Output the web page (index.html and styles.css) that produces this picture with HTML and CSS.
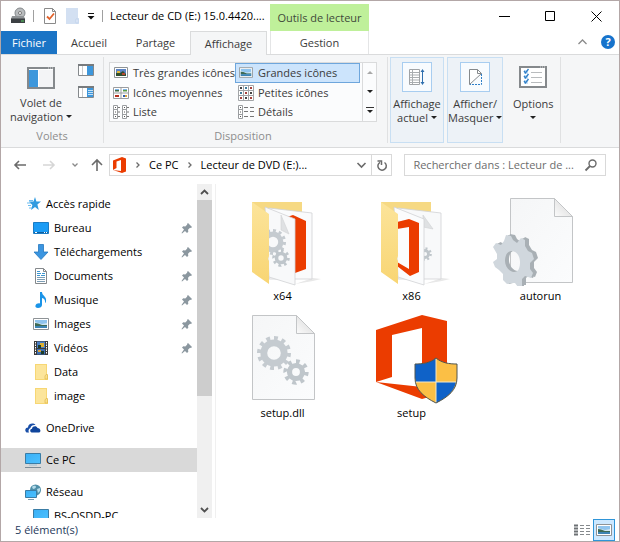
FILE: index.html
```html
<!DOCTYPE html>
<html lang="fr">
<head>
    <meta charset="UTF-8">
    <meta name="viewport" content="width=device-width, initial-scale=1.0">
    <title>Lecteur de CD (E:)</title>
    <link rel="stylesheet" href="styles.css">
</head>
<body>
    <svg class="sprites" aria-hidden="true">
        <defs>
            <linearGradient id="blue" x1="0" y1="0" x2="1" y2="1">
                <stop offset="0" stop-color="#3ab0f5"/>
                <stop offset="1" stop-color="#4cc0ff"/>
            </linearGradient>
            <linearGradient id="flap" x1="0" y1="0" x2="0" y2="1">
                <stop offset="0" stop-color="#fce49a"/>
                <stop offset="1" stop-color="#f8d573"/>
            </linearGradient>
            <linearGradient id="paper" x1="0" y1="0" x2="1" y2="1">
                <stop offset="0" stop-color="#f5f6f7"/>
                <stop offset="1" stop-color="#fbfcfd"/>
            </linearGradient>
            <linearGradient id="fold" x1="0" y1="1" x2="1" y2="0">
                <stop offset="0" stop-color="#fbfbfb"/>
                <stop offset="1" stop-color="#d4d4d4"/>
            </linearGradient>
        </defs>
        <symbol id="pin" viewBox="0 0 12 12">
            <path d="M7 1l4 4-1 1-1-.3-2 2 .3 2-1.300 1.300-2-2L1 11.500.500 11 3 7.500l-2-2L2.300 4.300l2 .3 2-2L6 2z" fill="#8b979f"/>
        </symbol>
        <symbol id="folder" viewBox="0 0 14 16">
            <path d="M0 0h12v11h1v5H0z" fill="#f7d774"/>
            <path d="M1 1h10v14H1z" fill="#fce59b"/>
            <path d="M10 15v-3l1-1.500h1.500V15z" fill="#fae08c" stroke="#dfb94f" stroke-width=".7"/>
        </symbol>
        <symbol id="screen" viewBox="0 0 16 16">
            <path d="M.5 1.500h15v10H.5z" fill="url(#blue)" stroke="#3a7ca5"/>
            <path d="M4 13h8" stroke="#9bc0d6"/>
            <path d="M0 15.500h16" stroke="#7b8b96"/>
        </symbol>
        <symbol id="picture" viewBox="0 0 16 12">
            <path d="M.5.500h15v11H.5z" fill="#fff" stroke="#8e9396"/>
            <path d="M2 2h12v8H2z" fill="#8fc4ee"/>
            <path d="M2 4l3 1 4 1 5-1v2H2z" fill="#cfe6f2"/>
            <path d="M2 5l3 .5L9 7h5v1H2z" fill="#3d6a55"/>
            <path d="M2 8h12v2H2z" fill="#3c84b4"/>
        </symbol>
        <symbol id="gear12" viewBox="-20 -20 40 40">
            <circle r="12" fill="none" stroke="#c5cbd0" stroke-width="8"/>
            <circle r="17.500" fill="none" stroke="#c5cbd0" stroke-width="5" pathLength="24" stroke-dasharray="1 1"/>
        </symbol>
        <symbol id="gear8" viewBox="-20 -20 40 40">
            <circle r="10" fill="none" stroke="#bfc6cb" stroke-width="8"/>
            <circle r="16" fill="none" stroke="#bfc6cb" stroke-width="7" pathLength="16" stroke-dasharray=".9 1.100"/>
        </symbol>
        <symbol id="cog" viewBox="0 0 96 90">
            <path fill-rule="evenodd" d="M11 45L13 39 18 40 20 44 24 47 28 42 32 44V50L35 55 39 57 41 63 37 67V73L40 77 38 82 32 80 29 83 29 90 25 91 22 87H18L14 88 10 84V78L6 74 2 71 0 66 4 63V58L0 51 3 47 8 49zM19 55c-5 0-7 5-7 10s4 11 9 11 6-5 6-10-3-11-8-11z"/>
        </symbol>
        <symbol id="page" viewBox="0 0 96 90">
            <path d="M17.500 2.500h44l18 18v66h-62z" fill="url(#paper)" stroke="#c3c5c7"/>
            <path d="M61.500 2.500v18h18z" fill="url(#fold)" stroke="#c3c5c7"/>
        </symbol>
    </svg>

    <div class="window">
        <header class="titlebar">
            <div class="quick-access">
                <svg width="16" height="16" viewBox="0 0 16 16">
                    <ellipse cx="10" cy="5" rx="5" ry="5" fill="#b8bbbd" stroke="#85898c"/>
                    <ellipse cx="10" cy="5" rx="1.500" ry="1.500" fill="#fff" stroke="#777"/>
                    <path d="M2 8h12l1 3H1z" fill="#909497"/>
                    <path d="M1 10.500h14V15H1z" fill="#3c4043"/>
                    <path d="M11 13h3" stroke="#58d264"/>
                </svg>
                <span class="separator"></span>
                <button class="icon-button" aria-label="Propriétés">
                    <svg width="12" height="16" viewBox="0 0 12 16">
                        <path d="M.5.500h8l3 3v12H.5z" fill="#fff" stroke="#8a8a8a"/>
                        <path d="M8.500.500v3h3" fill="none" stroke="#8a8a8a"/>
                        <path d="M3 8.500l2.500 2.500L10 5.500" fill="none" stroke="#e2622b" stroke-width="1.800"/>
                    </svg>
                </button>
                <button class="icon-button" aria-label="Nouveau dossier">
                    <svg width="13" height="16" viewBox="0 0 13 16">
                        <path d="M0 0h12v10h1v6H0z" fill="#d3e0f2"/>
                        <path d="M10 15v-4h2v4z" fill="#e8effa" stroke="#b9cdea" stroke-width=".7"/>
                    </svg>
                </button>
                <button class="icon-button customize" aria-label="Personnaliser">
                    <svg width="8" height="8" viewBox="0 0 8 8"><path d="M1 1.500h6" stroke="#111"/><path d="M.500 4h7L4 7.500z" fill="#111"/></svg>
                </button>
                <span class="separator"></span>
            </div>
            <h1 class="window-title">Lecteur de CD (E:) 15.0.4420....</h1>
            <div class="context-title">Outils de lecteur</div>
            <div class="window-controls">
                <button aria-label="Réduire"><svg width="11" height="11" viewBox="0 0 11 11"><path d="M0 5.500h11"/></svg></button>
                <button aria-label="Agrandir"><svg width="11" height="11" viewBox="0 0 11 11"><path d="M.5.500h9v9h-9z"/></svg></button>
                <button aria-label="Fermer"><svg width="11" height="11" viewBox="0 0 11 11"><path d="M.5.500l10 10M10.500.500l-10 10"/></svg></button>
            </div>
        </header>

        <nav class="tabs">
            <button class="tab-file">Fichier</button>
            <button class="tab-home">Accueil</button>
            <button class="tab-share">Partage</button>
            <button class="tab-active">Affichage</button>
            <button class="tab-context">Gestion</button>
            <div class="tabs-end">
                <button class="icon-button" aria-label="Réduire le ruban">
                    <svg width="9" height="6" viewBox="0 0 9 6"><path d="M.5 5l4-4 4 4" fill="none" stroke="#8a8a8a" stroke-width="1.300"/></svg>
                </button>
                <button class="help" aria-label="Aide">?</button>
            </div>
        </nav>

        <section class="ribbon">
            <div class="group group-panes">
                <div class="group-body">
                    <button class="large-button">
                        <svg width="28" height="22" viewBox="0 0 28 22">
                            <path d="M1 1h26v20H1z" fill="#fff" stroke="#85898c" stroke-width="2"/>
                            <path d="M2 3h9v17H2z" fill="#3d97dc"/>
                            <path d="M12 3h14v17H12z" fill="#f3f4f6"/>
                            <path d="M21 1h1M23 1h1M25 1h1" stroke="#d5d7d8"/>
                        </svg>
                        <span>Volet de<br>navigation <i class="caret"></i></span>
                    </button>
                    <div class="small-buttons">
                        <button class="icon-button" aria-label="Volet de visualisation">
                            <svg width="16" height="12" viewBox="0 0 16 12">
                                <path d="M.5 1h15v10.500H.5z" fill="#fff" stroke="#85898c"/>
                                <path d="M0 1h16" stroke="#777b7e" stroke-width="2"/>
                                <path d="M9 2h6v9H9z" fill="#3d97dc"/><path d="M4.500 2v9" stroke="#c8cbcd"/>
                            </svg>
                        </button>
                        <button class="icon-button" aria-label="Volet des détails">
                            <svg width="16" height="12" viewBox="0 0 16 12">
                                <path d="M.5 1h15v10.500H.5z" fill="#fff" stroke="#85898c"/>
                                <path d="M0 1h16" stroke="#777b7e" stroke-width="2"/>
                                <path d="M9 2h6v9H9z" fill="#3d97dc"/><path d="M4.500 2v9" stroke="#c8cbcd"/>
                                <path d="M10 4.500h5M10 6.500h5M10 8.500h5" stroke="#c4e0f5"/>
                            </svg>
                        </button>
                    </div>
                </div>
                <div class="group-label">Volets</div>
            </div>

            <div class="group group-layout">
                <div class="gallery">
                    <button class="view">
                        <svg width="16" height="14" viewBox="0 0 16 14">
                            <path d="M1.500 1.500h13v10h-13z" fill="#fff" stroke="#8e9396"/>
                            <path d="M3 3h10v7H3z" fill="#5b83c4"/><path d="M3 7h4l3-2 3 3v2H3z" fill="#2f4d2e"/>
                            <path d="M4 5h3v2H4z" fill="#e0b93c"/><path d="M9 7h3v2H9z" fill="#b5462f"/>
                        </svg>
                        <span>Très grandes icônes</span>
                    </button>
                    <button class="view view-selected">
                        <svg width="16" height="14"><use href="#picture" x="1" y="1" width="14" height="11"/></svg>
                        <span>Grandes icônes</span>
                    </button>
                    <button class="view">
                        <svg width="16" height="14" viewBox="0 0 16 14">
                            <path d="M.5 1.500h15v11H.5zM8 1.500v11M.5 7h15" fill="#fff" stroke="#9a9da0"/>
                            <path d="M2 3h4v1H2zM10 3h4v1h-4z" fill="#7db4e6"/>
                            <path d="M2 4h4v1.500H2z" fill="#3d6a45"/><path d="M10 4h4v1.500h-4z" fill="#5a9a45"/>
                            <path d="M2 9h4v2H2z" fill="#b5301f"/><path d="M10 9h2v2h-2z" fill="#2f5fae"/><path d="M12 9h2v2h-2z" fill="#d9a13c"/>
                        </svg>
                        <span>Icônes moyennes</span>
                    </button>
                    <button class="view">
                        <svg width="16" height="16" viewBox="0 0 16 16">
                            <path d="M.5.500h15v15H.5zM5.500.500v15M10.500.500v15M.5 5.500h15M.5 10.500h15" fill="#fff" stroke="#a2a5a8"/>
                            <path d="M2 3h2M12 8h2M7 13h2" stroke="#444" stroke-width="2"/>
                            <path d="M7 3h2M2 8h2" stroke="#3d7a9a" stroke-width="2"/>
                            <path d="M12 3h2M7 8h2M2 13h2M12 13h2" stroke="#a5403a" stroke-width="2"/>
                        </svg>
                        <span>Petites icônes</span>
                    </button>
                    <button class="view">
                        <svg width="16" height="14" viewBox="0 0 16 14">
                            <path d="M.5.500h4v13h-4zM.5 4.500h4M.5 9.500h4M9.500.500h4v13h-4zM9.500 4.500h4M9.500 9.500h4" fill="#fff" stroke="#9a9da0"/>
                            <path d="M5 2.500h2M5 7h2M5 11.500h2M14 2.500h2M14 7h2M14 11.500h2" stroke="#777"/>
                            <path d="M2 2.500h1M2 7h1M2 11.500h1M11 2.500h1M11 7h1M11 11.500h1" stroke="#555"/>
                        </svg>
                        <span>Liste</span>
                    </button>
                    <button class="view">
                        <svg width="16" height="14" viewBox="0 0 16 14">
                            <path d="M.5.500h4v13h-4zM.5 4.500h4M.5 9.500h4" fill="#fff" stroke="#9a9da0"/>
                            <path d="M6 2.500h4M12 2.500h4M6 6.500h4M12 6.500h4M6 11.500h4M12 11.500h4" stroke="#777"/>
                            <path d="M2 2.500h1M2 7h1M2 11.500h1" stroke="#555"/>
                        </svg>
                        <span>Détails</span>
                    </button>
                    <div class="gallery-scroll">
                        <button aria-label="Précédent"><i class="caret caret-up"></i></button>
                        <button aria-label="Suivant"><i class="caret"></i></button>
                        <button aria-label="Autres"><i class="caret caret-more"></i></button>
                    </div>
                </div>
                <div class="group-label">Disposition</div>
            </div>

            <div class="group group-commands">
                <button class="command command-boxed">
                    <span class="command-icon">
                        <svg width="16" height="16" viewBox="0 0 16 16">
                            <path d="M.5.500h10v15H.5z" fill="#fff" stroke="#a0a3a6"/>
                            <path d="M1 3.500h9M1 6h9M1 8.500h9M1 11h9M1 13.500h9M3.500 1v14" stroke="#a9adb0"/>
                            <path d="M13.500 1v14" stroke="#2f6fae"/>
                            <path d="M11.500 3l2-3 2 3zM11.500 13l2 3 2-3z" fill="#2f6fae"/>
                        </svg>
                    </span>
                    <span>Affichage<br>actuel <i class="caret"></i></span>
                </button>
                <button class="command command-boxed">
                    <span class="command-icon">
                        <svg width="13" height="16" viewBox="0 0 13 16">
                            <path d="M.5.500h8l4 4L.5 15.500z" fill="#fff" stroke="#85898c"/>
                            <path d="M8.500.500v4h4" fill="none" stroke="#85898c"/>
                            <path d="M12.500 5v10.500H1" fill="none" stroke="#2f7fc8" stroke-dasharray="2 1"/>
                        </svg>
                    </span>
                    <span>Afficher/<br>Masquer <i class="caret"></i></span>
                </button>
                <button class="command">
                    <span class="command-icon">
                        <svg width="28" height="22" viewBox="0 0 28 22">
                            <path d="M1 1h26v20H1z" fill="#fff" stroke="#85898c" stroke-width="2"/>
                            <path d="M21 1h1M23 1h1M25 1h1" stroke="#d5d7d8"/>
                            <path d="M5 4h4v4H5zM5 9h4v4H5zM5 14h4v4H5z" fill="#c9e2f6"/>
                            <path d="M5 5l1.500 2L9.500 3M5 10l1.500 2L9.500 8M5 15l1.500 2 3-4" fill="none" stroke="#2f7fc8" stroke-width="1.300"/>
                            <path d="M12 6.500h11M12 11.500h11M12 16.500h11" stroke="#b9bcbe"/>
                        </svg>
                    </span>
                    <span>Options<br><i class="caret"></i></span>
                </button>
            </div>
        </section>

        <div class="navbar">
            <div class="nav-buttons">
                <button class="icon-button" aria-label="Précédent">
                    <svg width="12" height="10" viewBox="0 0 12 10"><path d="M1 5h11M5 1L1 5l4 4" fill="none" stroke="#6b6b6b" stroke-width="1.600"/></svg>
                </button>
                <button class="icon-button" aria-label="Suivant">
                    <svg width="12" height="10" viewBox="0 0 12 10"><path d="M0 5h11M7 1l4 4-4 4" fill="none" stroke="#d6d6d6" stroke-width="1.600"/></svg>
                </button>
                <button class="icon-button" aria-label="Emplacements récents">
                    <svg width="6" height="4" viewBox="0 0 6 4"><path d="M.5.500L3 3 5.500.500" fill="none" stroke="#8a8a8a" stroke-width="1.300"/></svg>
                </button>
                <button class="icon-button parent-folder" aria-label="Dossier parent">
                    <svg width="12" height="12" viewBox="0 0 12 12"><path d="M6 12V1M1 6l5-5 5 5" fill="none" stroke="#6b6b6b" stroke-width="1.600"/></svg>
                </button>
            </div>
            <div class="address">
                <svg width="14" height="16" viewBox="0 0 14 16">
                    <path d="M0 3.500L9 0l4 1.500v13L9 16 0 13l8 1V3L3.500 4.500V11L0 13z" fill="#eb3c00"/>
                </svg>
                <svg class="chevron" width="4" height="6" viewBox="0 0 4 6"><path d="M.5.500L3 3 .5 5.500"/></svg>
                <a href="#">Ce PC</a>
                <svg class="chevron" width="4" height="6" viewBox="0 0 4 6"><path d="M.5.500L3 3 .5 5.500"/></svg>
                <a href="#">Lecteur de DVD (E:)...</a>
                <button class="address-history" aria-label="Historique">
                    <svg width="9" height="6" viewBox="0 0 9 6"><path d="M.5 1l4 4 4-4" fill="none" stroke="#6b6b6b" stroke-width="1.600"/></svg>
                </button>
                <button class="refresh" aria-label="Actualiser">
                    <svg width="10" height="11" viewBox="0 0 10 11"><path d="M7.500 2.500A4.200 4.200 0 1 1 3 2.300M.5 1h4v4" fill="none" stroke="#6b6b6b" stroke-width="1.500"/></svg>
                </button>
            </div>
            <form class="search">
                <input type="text" aria-label="Rechercher" placeholder="Rechercher dans : Lecteur de ...">
                <svg width="12" height="12" viewBox="0 0 12 12"><circle cx="7.500" cy="4.500" r="3.500" fill="none" stroke="#6b6b6b" stroke-width="1.400"/><path d="M5 7l-4.500 4.500" stroke="#6b6b6b" stroke-width="1.800"/></svg>
            </form>
        </div>

        <main class="main">
            <aside class="sidebar">
                <nav class="tree">
                    <a href="#" class="node node-quick">
                        <svg width="14" height="14" viewBox="0 0 14 14">
                            <path d="M8 0l1.400 4.600H14l-3.600 3L11.800 13 8 10l-4 3 1.400-5-3.600-3.400h4.700z" fill="#2f9be0"/>
                            <path d="M0 6h4M1 8.500h3M2 11h3M2 3.500h4" stroke="#6bbcf0"/>
                        </svg>
                        <span>Accès rapide</span>
                    </a>
                    <a href="#" class="node node-child">
                        <svg width="16" height="16" viewBox="0 0 16 16"><path d="M.5 2.500h15v11H.5z" fill="#1b9cf5" stroke="#1b7cc4"/><path d="M1 12.500h14" stroke="#0f5f9e"/><path d="M2 12.500h2M11 12.500h1M13 12.500h1" stroke="#fff"/></svg>
                        <span>Bureau</span>
                        <svg class="pin" width="12" height="12"><use href="#pin"/></svg>
                    </a>
                    <a href="#" class="node node-child">
                        <svg width="16" height="16" viewBox="0 0 16 16"><path d="M5.500.500h5V8h4.500l-7 7.500L1 8h4.500z" fill="#3b95e0" stroke="#2478c0" stroke-width=".8"/></svg>
                        <span>Téléchargements</span>
                        <svg class="pin" width="12" height="12"><use href="#pin"/></svg>
                    </a>
                    <a href="#" class="node node-child">
                        <svg width="16" height="16" viewBox="0 0 16 16">
                            <path d="M2.500.500h8l3 3v12h-11z" fill="#fff" stroke="#85898c"/><path d="M10.500.500v3h3" fill="none" stroke="#85898c"/>
                            <path d="M4 5.500h4M9 5.500h3M4 7.500h3M8 7.500h4M4 3.500h3" stroke="#3b95d0"/>
                            <path d="M4 9.500h8M4 11.500h8M4 13.500h8" stroke="#7c9db4"/>
                        </svg>
                        <span>Documents</span>
                        <svg class="pin" width="12" height="12"><use href="#pin"/></svg>
                    </a>
                    <a href="#" class="node node-child">
                        <svg width="16" height="16" viewBox="0 0 16 16"><path d="M7 0h2c0 4 5 4 4 9.500-.4 1-.8 1.500-1 1.500.6-3-1-4.500-3-5v7c0 2-2 3-4 3s-3-1-2.500-2.500S5 11 7 11.500z" fill="#1a94e8"/></svg>
                        <span>Musique</span>
                        <svg class="pin" width="12" height="12"><use href="#pin"/></svg>
                    </a>
                    <a href="#" class="node node-child">
                        <svg width="16" height="12"><use href="#picture"/></svg>
                        <span>Images</span>
                        <svg class="pin" width="12" height="12"><use href="#pin"/></svg>
                    </a>
                    <a href="#" class="node node-child">
                        <svg width="16" height="16" viewBox="0 0 16 16">
                            <path d="M1 1h14v14H1z" fill="#3b3b3b"/><path d="M2.500 2v12M13.500 2v12" stroke="#fff" stroke-dasharray="1.500 1"/>
                            <path d="M4 1.500h8V8H4z" fill="#4a7fc4"/><path d="M4 9h8v5.500H4z" fill="#3c6fb4"/>
                            <path d="M7 3h4v4H7z" fill="#e0b030"/><path d="M5 5h3v3H5zM8 11h3v3H8z" fill="#1c3c28"/><path d="M5 10h3v2H5z" fill="#d9a13c"/>
                        </svg>
                        <span>Vidéos</span>
                        <svg class="pin" width="12" height="12"><use href="#pin"/></svg>
                    </a>
                    <a href="#" class="node node-child">
                        <svg width="16" height="16"><use href="#folder" x="2" width="14" height="16"/></svg>
                        <span>Data</span>
                    </a>
                    <a href="#" class="node node-child">
                        <svg width="16" height="16"><use href="#folder" x="2" width="14" height="16"/></svg>
                        <span>image</span>
                    </a>
                    <a href="#" class="node node-root">
                        <svg width="16" height="16" viewBox="0 0 16 16">
                            <path d="M1.500 12.500C-.5 11 0 7.500 3 7.500 3 4 8 2 10.500 5c-3-.5-5 1-5 3-2 .5-2.500 3-1.500 4.500z" fill="#1a4fa8"/>
                            <path d="M6.500 12.500c-2-1-1.500-3.500.5-3.800C7.500 6 11.500 5.500 12.500 8c2.800 0 4 3.500 1.800 4.500z" fill="#0f459c"/>
                        </svg>
                        <span>OneDrive</span>
                    </a>
                    <a href="#" class="node node-root node-selected">
                        <svg width="16" height="16"><use href="#screen"/></svg>
                        <span>Ce PC</span>
                    </a>
                    <a href="#" class="node node-root">
                        <svg width="16" height="16" viewBox="0 0 16 16">
                            <circle cx="10.500" cy="6" r="5.500" fill="#4f8fa8"/><path d="M7 3c2-2 4-1 4 0s-2 2-3 2zM12 5l3-1v3l-2 2z" fill="#b5dcea"/>
                            <path d="M.5 6.500h11v7H.5z" fill="url(#blue)" stroke="#3a7ca5"/><path d="M3 15.500h6" stroke="#7b9bae"/>
                        </svg>
                        <span>Réseau</span>
                    </a>
                    <a href="#" class="node node-child">
                        <svg width="16" height="16"><use href="#screen"/></svg>
                        <span>BS-OSDD-PC</span>
                    </a>
                </nav>
                <div class="scrollbar">
                    <svg width="15" height="16" viewBox="0 0 15 16"><path d="M4 10l3.500-3.500L11 10" fill="none" stroke="#505050" stroke-width="1.800"/></svg>
                    <div class="scroll-track"><div class="scroll-thumb"></div></div>
                    <svg width="15" height="16" viewBox="0 0 15 16"><path d="M4 6l3.500 3.500L11 6" fill="none" stroke="#505050" stroke-width="1.800"/></svg>
                </div>
            </aside>

            <section class="files">
                <a href="#" class="file">
                    <svg width="96" height="90" viewBox="0 0 96 90">
                        <path d="M60 88l18-6 8 1-8 2z" fill="#e8e8e8"/>
                        <path d="M17 6h50v12H17z" fill="#f6d983"/>
                        <path d="M34 12l43 5v66H34z" fill="#fafbfc" stroke="#d0d2d4" stroke-width=".8"/>
                        <path d="M52 21l6-2 13 6v48l-11 4z" fill="#eb3c00"/>
                        <path d="M30 11l30 12v66l-26-8z" fill="#f8f9fa" stroke="#d0d2d4" stroke-width=".8"/>
                        <path d="M46 19v15l8 4z" fill="#dfe1e3" stroke="#d0d2d4" stroke-width=".6"/>
                        <use href="#gear12" x="25" y="33" width="26" height="26"/>
                        <use href="#gear8" x="37" y="53" width="18" height="18"/>
                        <path d="M17 6l17 12v42l-1 3 1 2v23L17 76z" fill="url(#flap)"/>
                    </svg>
                    <span>x64</span>
                </a>
                <a href="#" class="file">
                    <svg width="96" height="90" viewBox="0 0 96 90">
                        <path d="M60 88l18-6 8 1-8 2z" fill="#e8e8e8"/>
                        <path d="M17 6h50v12H17z" fill="#f6d983"/>
                        <path d="M34 12l43 5v66H34z" fill="#f8f9fa" stroke="#d0d2d4" stroke-width=".8"/>
                        <path d="M59 19v12l10 2z" fill="#dfe1e3" stroke="#d0d2d4" stroke-width=".6"/>
                        <use href="#gear8" x="54" y="51" width="14" height="14"/>
                        <path d="M30 11l30 12v66l-26-8z" fill="#fbfcfd" stroke="#d0d2d4" stroke-width=".8"/>
                        <path d="M33 26L45 23 55 27V76L46 80 33 70V66L45 73V31L33 33z" fill="#eb3c00"/>
                        <path d="M17 6l17 12v42l-1 3 1 2v23L17 76z" fill="url(#flap)"/>
                    </svg>
                    <span>x86</span>
                </a>
                <a href="#" class="file">
                    <svg width="96" height="90" viewBox="0 0 96 90">
                        <use href="#page"/>
                        <use href="#cog" x="4" y="-1" width="96" height="90" fill="#a9b0b5"/>
                        <use href="#cog" x="2" width="96" height="90" fill="#a9b0b5"/>
                        <use href="#cog" width="96" height="90" fill="#d0d7dd"/>
                    </svg>
                    <span>autorun</span>
                </a>
                <a href="#" class="file">
                    <svg width="96" height="90" viewBox="0 0 96 90">
                        <use href="#page"/>
                        <use href="#gear12" x="22" y="23" width="34" height="34"/>
                        <use href="#gear8" x="48" y="46" width="26" height="26"/>
                    </svg>
                    <span>setup.dll</span>
                </a>
                <a href="#" class="file">
                    <svg width="96" height="90" viewBox="0 0 96 90">
                        <path d="M12 17L58 2 83 8V79L58 86 12 69 58 74V15L28 22V64L12 69z" fill="#eb3c00"/>
                        <path d="M72 45c-6 5-13 6-21 6v14c0 12 9 19 21 25 12-6 21-13 21-25V51c-8 0-15-1-21-6z" fill="#fbbf45"/>
                        <path d="M72 45c-6 5-13 6-21 6v14l1 4h20zM72 69h20c-2 10-10 16-20 21z" fill="#0f62c8"/>
                        <path d="M72 45v45M51 69h42" stroke="#f3e8c8"/>
                        <path d="M72 45c-6 5-13 6-21 6v14c0 12 9 19 21 25 12-6 21-13 21-25V51c-8 0-15-1-21-6z" fill="none" stroke="#51554f"/>
                    </svg>
                    <span>setup</span>
                </a>
            </section>
        </main>

        <footer class="statusbar">
            <span>5 élément(s)</span>
            <div class="view-switch">
                <button aria-label="Détails">
                    <svg width="16" height="12" viewBox="0 0 16 12"><path d="M0 1.500h4M0 4.500h4M0 7.500h4M0 10.500h4" stroke="#6d7174" stroke-width="2"/><path d="M6 1.500h4M12 1.500h4M6 4.500h4M12 4.500h4M6 7.500h4M12 7.500h4M6 10.500h4M12 10.500h4" stroke="#85898c"/></svg>
                </button>
                <button class="switch-active" aria-label="Grandes icônes">
                    <svg width="16" height="12"><use href="#picture"/></svg>
                </button>
            </div>
        </footer>
    </div>
</body>
</html>
```
FILE: styles.css
```css
* {
    box-sizing: border-box;
}

body {
    margin: 0;
    font-family: "Open Sans", "Noto Sans", sans-serif;
    font-size: 11px;
    line-height: 16px;
    color: #000;
    background-color: #fff;
}

button {
    margin: 0;
    padding: 0;
    border: none;
    background: none;
    font: inherit;
    color: inherit;
}

a {
    color: inherit;
    text-decoration: none;
}

svg {
    display: block;
    flex: none;
    overflow: visible;
}

.sprites {
    position: absolute;
    width: 0;
    height: 0;
}

.window {
    display: flex;
    flex-direction: column;
    height: 100vh;
    border: 1px solid #b3a7a7;
}

/* Title bar */
.titlebar {
    display: flex;
    align-items: center;
    height: 30px;
    flex: none;
}

.quick-access {
    display: flex;
    align-items: center;
    gap: 10px;
    width: 109px;
    padding-left: 9px;
    flex: none;
}

.separator {
    width: 1px;
    height: 12px;
    margin-left: -3px;
    background-color: #a0a0a0;
}

.customize {
    margin-left: -2px;
}

.icon-button {
    display: flex;
    align-items: center;
    justify-content: center;
}

.window-title {
    width: 160px;
    margin: 0;
    font-size: 11px;
    font-weight: normal;
    white-space: nowrap;
    flex: none;
}

.context-title {
    align-self: flex-end;
    width: 99px;
    height: 27px;
    line-height: 28px;
    text-align: center;
    white-space: nowrap;
    color: #3f4a3a;
    background-color: #bff09a;
    flex: none;
}

.window-controls {
    display: flex;
    margin-left: auto;
}

.window-controls button {
    display: flex;
    justify-content: center;
    width: 46px;
}

.window-controls path {
    fill: none;
    stroke: #000;
    stroke-width: 1;
}

/* Ribbon tabs */
.tabs {
    display: flex;
    height: 24px;
    flex: none;
    color: #3b3b3b;
    border-bottom: 1px solid #dadbdc;
}

.tab-file {
    width: 56px;
    color: #fff;
    background-color: #1b74c5;
}

.tab-home {
    width: 64px;
}

.tab-share {
    width: 69px;
}

.tab-active {
    width: 77px;
    height: 24px;
    border: 1px solid #dadbdc;
    border-bottom: none;
    background-color: #f5f6f7;
}

.tab-context {
    width: 99px;
    margin-left: 3px;
    border: solid #e4e5e6;
    border-width: 0 1px;
}

.tabs-end {
    display: flex;
    align-items: center;
    gap: 14px;
    margin-left: auto;
    padding: 0 4px 2px 0;
}

.help {
    width: 14px;
    height: 14px;
    border-radius: 50%;
    line-height: 14px;
    font-weight: bold;
    color: #fff;
    background-color: #1673cc;
}

/* Ribbon */
.ribbon {
    display: flex;
    height: 93px;
    flex: none;
    line-height: 14px;
    color: #3b3b3b;
    background-color: #f5f6f7;
    border-bottom: 1px solid #dadbdc;
}

.group {
    display: flex;
    flex-direction: column;
    justify-content: space-between;
    margin: 2px 0 4px;
    border-right: 1px solid #e0e1e2;
}

.group-label {
    text-align: center;
    color: #8d8d8d;
}

.group-panes {
    width: 103px;
}

.group-body {
    display: flex;
    justify-content: center;
    gap: 6px;
    padding-top: 7px;
}

.large-button {
    display: flex;
    flex-direction: column;
    align-items: center;
    gap: 7px;
    padding-top: 3px;
}

.small-buttons {
    display: flex;
    flex-direction: column;
    gap: 10px;
}

.caret {
    display: inline-block;
    border: 3px solid transparent;
    border-top-color: #222;
    border-bottom: none;
    vertical-align: 3px;
}

.group-layout {
    width: 284px;
    padding: 5px 10px 0 5px;
}

.gallery {
    display: grid;
    grid-template-columns: 1fr 1fr 16px;
    grid-template-rows: 20px 19px 19px;
    border: 1px solid #dadbdc;
    background-color: #fbfcfd;
}

.view {
    display: flex;
    align-items: center;
    gap: 4px;
    padding-left: 3px;
    white-space: nowrap;
}

.view-selected {
    border: 1px solid #6ea6dc;
    padding-left: 2px;
    background-color: #cce4fc;
}

.gallery-scroll {
    grid-column: 3;
    grid-row: 1 / 4;
    display: flex;
    flex-direction: column;
    margin-left: 2px;
    border-left: 1px solid #dadbdc;
}

.gallery-scroll button {
    display: flex;
    align-items: center;
    justify-content: center;
    flex: 1;
}

.caret-up {
    border-top: none;
    border-bottom: 3px solid #a8a8a8;
}

.caret-more {
    position: relative;
}

.caret-more::before {
    content: "";
    position: absolute;
    top: -6px;
    left: -4px;
    width: 8px;
    height: 1px;
    background-color: #333;
}

.group-commands {
    flex-direction: row;
    gap: 3px;
    padding-left: 2px;
}

.command {
    display: flex;
    flex-direction: column;
    align-items: center;
    gap: 5px;
    min-width: 54px;
    padding: 4px 0;
    border: 1px solid transparent;
    white-space: nowrap;
}

.command-icon {
    display: flex;
    align-items: center;
    justify-content: center;
    width: 30px;
    height: 30px;
}

.command-boxed {
    border-color: #c8dff3;
    background-color: #edf2f7;
}

.command-boxed .command-icon {
    border: 1px solid #a8cdf0;
    background-color: #f8fbfe;
}

/* Address bar */
.navbar {
    display: flex;
    align-items: center;
    height: 36px;
    flex: none;
    padding: 0 13px 2px;
}

.nav-buttons {
    display: flex;
    align-items: center;
    gap: 17px;
    width: 95px;
    flex: none;
}

.parent-folder {
    margin-left: -4px;
}

.address {
    display: flex;
    align-items: center;
    gap: 9px;
    height: 22px;
    padding-left: 3px;
    border: 1px solid #d9d9d9;
    flex: 1 1 284px;
    min-width: 0;
    white-space: nowrap;
}

.chevron path {
    fill: none;
    stroke: #6b6b6b;
    stroke-width: 1.3;
}

.address-history {
    margin-left: auto;
}

.refresh {
    display: flex;
    align-items: center;
    justify-content: center;
    width: 20px;
    height: 20px;
    margin-left: -4px;
    border-left: 1px solid #d9d9d9;
}

.search {
    display: flex;
    align-items: center;
    height: 22px;
    margin-left: 12px;
    padding: 0 8px;
    border: 1px solid #d9d9d9;
    flex: 1 1 202px;
    min-width: 0;
}

.search input {
    flex: 1;
    min-width: 0;
    padding: 0;
    border: none;
    outline: none;
    font: inherit;
}

.search input::placeholder {
    color: #6d6d6d;
}

/* Content */
.main {
    display: flex;
    flex: 1;
    min-height: 0;
}

.sidebar {
    display: flex;
    width: 215px;
    flex: none;
    padding-right: 3px;
    border-right: 1px solid #f0f0f0;
}

.tree {
    flex: 1;
    padding-top: 8px;
    overflow: hidden;
}

.node {
    display: flex;
    align-items: center;
    gap: 5px;
    height: 24px;
    padding-right: 4px;
}

.node-quick {
    padding-left: 26px;
}

.node-child {
    padding-left: 32px;
}

.node-root {
    margin: 8px 0;
    padding-left: 24px;
}

.node-root + .node-child {
    margin-top: -8px;
}

.node-selected {
    background-color: #d9d9d9;
}

.pin {
    margin-left: auto;
}

.scrollbar {
    display: flex;
    flex-direction: column;
    width: 15px;
    background-color: #f0f0f0;
}

.scroll-track {
    flex: 1;
}

.scroll-thumb {
    height: 65%;
    background-color: #cdcdcd;
}

.files {
    display: grid;
    grid-template-columns: repeat(auto-fill, 129px);
    align-content: start;
    gap: 7px 0;
    flex: 1;
    padding: 12px 0 0 2px;
}

.file {
    display: flex;
    flex-direction: column;
    align-items: center;
    line-height: 20px;
}

/* Status bar */
.statusbar {
    display: flex;
    align-items: center;
    justify-content: space-between;
    height: 23px;
    flex: none;
    padding: 0 4px 0 14px;
    color: #1e395b;
}

.view-switch {
    display: flex;
}

.view-switch button {
    display: flex;
    align-items: center;
    justify-content: center;
    width: 22px;
    height: 22px;
    border: 1px solid transparent;
}

.view-switch .switch-active {
    border-color: #2f95d8;
    background-color: #cce8ff;
}
```
